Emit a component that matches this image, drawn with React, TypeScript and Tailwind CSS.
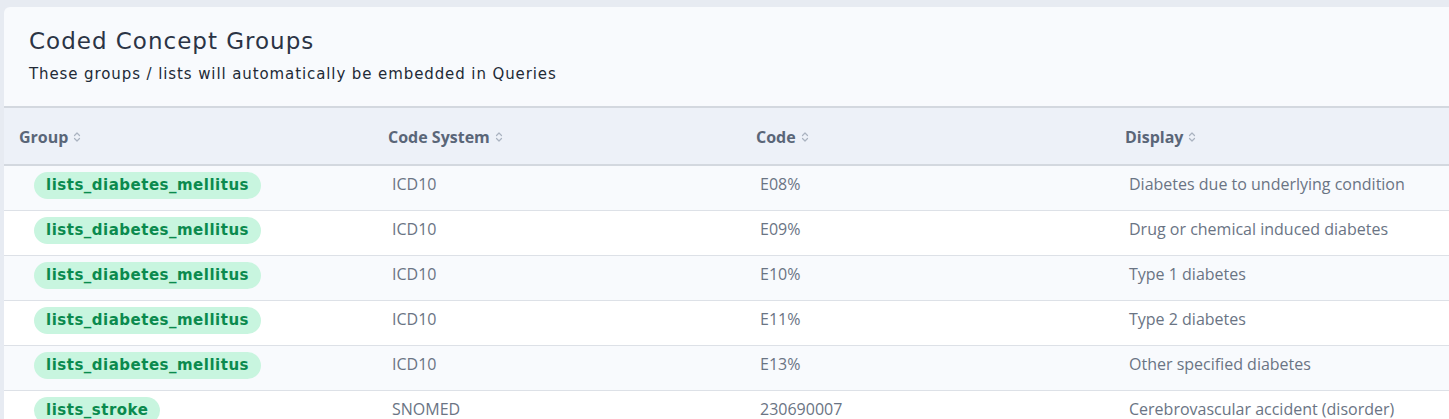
import React from "react"

const rows = [
  { group: "lists_diabetes_mellitus", system: "ICD10", code: "E08%", display: "Diabetes due to underlying condition" },
  { group: "lists_diabetes_mellitus", system: "ICD10", code: "E09%", display: "Drug or chemical induced diabetes" },
  { group: "lists_diabetes_mellitus", system: "ICD10", code: "E10%", display: "Type 1 diabetes" },
  { group: "lists_diabetes_mellitus", system: "ICD10", code: "E11%", display: "Type 2 diabetes" },
  { group: "lists_diabetes_mellitus", system: "ICD10", code: "E13%", display: "Other specified diabetes" },
  { group: "lists_stroke", system: "SNOMED", code: "230690007", display: "Cerebrovascular accident (disorder)" },
]

const columns = ["Group", "Code System", "Code", "Display"]

function SortIcon() {
  return (
    <svg width="8" height="12" viewBox="0 0 8 12" className="ml-[5px] text-[#aab3c0]" fill="none" stroke="currentColor" strokeWidth="1.2" strokeLinecap="round" strokeLinejoin="round">
      <path d="M1.5 4.5 L4 2 L6.5 4.5" />
      <path d="M1.5 7.5 L4 10 L6.5 7.5" />
    </svg>
  )
}

export default function App() {
  return (
    <div className="w-full h-[419px] overflow-hidden bg-[#e7ebf2] pt-[7px] pl-[4px]">
      <div className="w-[1474px] rounded-tl-[6px] bg-[#f8fafd] overflow-hidden">
        {/* Card header */}
        <div className="h-[101px] pl-[25px] pt-[18px] border-b-2 border-[#d3d8df]" style={{ fontFamily: "'DejaVu Sans', Inter, sans-serif" }}>
          <h1 className="text-[23px] leading-[32px] font-normal tracking-[1px] text-[#2b3445]">Coded Concept Groups</h1>
          <p className="mt-[7px] text-[15px] leading-[20px] tracking-[0.9px] text-[#222a36]">
            These groups / lists will automatically be embedded in Queries
          </p>
        </div>

        {/* Table */}
        <div style={{ fontFamily: "'Open Sans', 'Noto Sans', sans-serif" }}>
          <div className="grid grid-cols-[369px_368px_369px_368px] h-[58px] bg-[#edf1f8] border-b-2 border-[#d3d8df]">
            {columns.map((c) => (
              <div key={c} className="flex items-center px-[15px] pt-[1px] text-[16px] font-bold text-[#5a6678]">
                {c}
                <SortIcon />
              </div>
            ))}
          </div>
          {rows.map((r, i) => (
            <div
              key={i}
              className={
                "grid grid-cols-[369px_368px_369px_368px] h-[45px] border-b border-[#dde1e7] text-[16px] text-[#6a7484] " +
                (i % 2 === 0 ? "bg-[#f8fafd]" : "bg-white")
              }
            >
              <div className="flex items-center pl-[30px] pb-[6px]">
                <span
                  className="inline-flex items-center h-[27px] px-[12px] rounded-full bg-[#c8f5df] text-[#0b8a4e] text-[15px] font-bold tracking-[0.5px]"
                  style={{ fontFamily: "'DejaVu Sans', Inter, sans-serif" }}
                >
                  {r.group}
                </span>
              </div>
              <div className="flex items-center pl-[19px] pb-[8px]">{r.system}</div>
              <div className="flex items-center pl-[19px] pb-[8px]">{r.code}</div>
              <div className="flex items-center pl-[19px] pb-[8px]">{r.display}</div>
            </div>
          ))}
        </div>
      </div>
    </div>
  )
}
